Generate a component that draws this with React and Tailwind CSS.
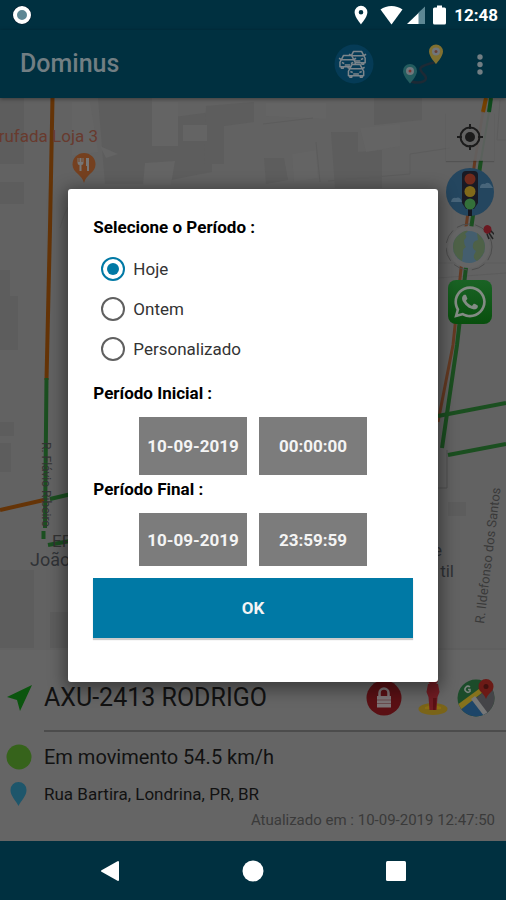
import React from "react";
import { useState } from "react";
import { FaWhatsapp } from "react-icons/fa";

const periods = ["Hoje", "Ontem", "Personalizado"];

const StatusBar = () => {
  return (
    <div className="h-[30px] bg-[#003040] flex items-center justify-between pl-3 pr-2 text-white">
      <svg viewBox="0 0 20 20" className="size-5">
        <circle cx="10" cy="10" r="9.5" fill="#001a2b" />
        <circle cx="10" cy="10" r="7" fill="#5d8794" stroke="#fff" strokeWidth="4" />
      </svg>
      <div className="flex items-center gap-1">
        <svg viewBox="0 0 14 20" className="w-[14px] h-5 mr-2">
          <path
            fillRule="evenodd"
            fill="#fff"
            d="M7 .8a6.4 6.4 0 0 0-6.4 6.5C.6 12 7 19.4 7 19.4s6.4-7.4 6.4-12.1A6.4 6.4 0 0 0 7 .8zm0 4.2a2.3 2.3 0 1 1 0 4.6a2.3 2.3 0 0 1 0-4.6z"
          />
        </svg>
        <svg viewBox="0 0 23 20" className="w-[23px] h-5">
          <path fill="#fff" d="M.5 4.5C6.5-.3 16.5-.3 22.5 4.5L11.5 19.5z" />
        </svg>
        <svg viewBox="0 0 18 20" className="w-[18px] h-5 mr-1">
          <path fill="#5d8794" d="M11 8L18 1.5V19h-7z" />
          <path fill="#fff" d="M0 19L11.5 8v11z" />
        </svg>
        <svg viewBox="0 0 13 20" className="w-[13px] h-5 mr-1">
          <path
            fill="#fff"
            d="M4 .5h5v2h2.5a1.5 1.5 0 0 1 1.500 1.500v14a1.500 1.500 0 0 1-1.500 1.500h-10A1.500 1.500 0 0 1 0 18V4a1.500 1.500 0 0 1 1.500-1.500H4z"
          />
        </svg>
        <span className="text-[17px] leading-6 font-bold">12:48</span>
      </div>
    </div>
  );
};

const Car = () => (
  <>
    <path d="M2.5 6L4.8 1.5h8.4L15.5 6" fill="#053b56" />
    <path d="M0 4.5l2.5 1.5h13L18 4.5" />
    <path d="M2.5 6L1 8.5v5h16v-5L15.5 6z" fill="#053b56" />
    <path d="M2.5 13.5V15h2v-1.5M13.5 13.5V15h2v-1.5M3 9l2.500 1M15 9l-2.500 1M6 11.500h6" />
  </>
);

const Header = () => {
  return (
    <header className="relative z-10 h-[68px] bg-[#003040] shadow-[0_1px_4px_rgba(0,0,0,0.4)] flex items-center gap-6 pl-5 pr-[14px]">
      <h1 className="flex-1 text-[25px] leading-8 font-medium text-[#727e83]">
        Dominus
      </h1>
      <button type="button" aria-label="Veículos" className="size-10">
        <svg viewBox="0 0 40 40" className="size-10">
          <circle cx="20" cy="20" r="19.500" fill="#053b56" />
          <g fill="none" stroke="#7c858b" strokeWidth="1.600" strokeLinejoin="round">
            <g transform="translate(15 6) scale(.95)">
              <Car />
            </g>
            <g transform="translate(5 10) scale(.95)">
              <Car />
            </g>
            <g transform="translate(13.500 19) scale(.95)">
              <Car />
            </g>
          </g>
        </svg>
      </button>
      <button type="button" aria-label="Rota" className="w-[46px] h-10">
        <svg viewBox="0 0 46 40" className="w-[46px] h-10">
          <path
            d="M13 37.500c10 3 19-1 13-7s-6-8 10-12"
            fill="none"
            stroke="#1d2a35"
            strokeWidth="2.500"
          />
          <path
            d="M38 .5a7 7 0 0 0-7 7C31 12.500 38 20 38 20s7-7.500 7-12.500a7 7 0 0 0-7-7z"
            fill="#807030"
          />
          <circle cx="38" cy="7.500" r="4" fill="#70757a" />
          <circle cx="38" cy="7.500" r="1.500" fill="#6a4136" />
          <path
            d="M12 20a7 7 0 0 0-7 7C5 32 12 39.500 12 39.500S19 32 19 27a7 7 0 0 0-7-7z"
            fill="#235c5f"
          />
          <circle cx="12" cy="27" r="4" fill="#70787d" />
          <circle cx="12" cy="27" r="1.500" fill="#7a3433" />
        </svg>
      </button>
      <button type="button" aria-label="Menu" className="w-6 h-10">
        <svg viewBox="0 0 24 40" className="w-6 h-10" fill="#727e83">
          <circle cx="12" cy="13" r="2.700" />
          <circle cx="12" cy="20.500" r="2.700" />
          <circle cx="12" cy="28" r="2.700" />
        </svg>
      </button>
    </header>
  );
};

const StreetMap = () => {
  return (
    <svg
      viewBox="0 0 506 552"
      preserveAspectRatio="xMidYMin slice"
      className="absolute inset-0 w-full h-full"
      fontFamily="Roboto, sans-serif"
    >
      <rect width="506" height="552" fill="#626262" />

      {/* Blocks */}
      <g fill="#5d5d5d">
        <path d="M0 0h24v66H0zM98 0h54v22l60-8v60l-62 12H105z" />
        <path d="M206 8l48-4v20l-30 4v38h-20zM331 34h27v20l24-2v38h-47zM264 60h20l4 22-22 4z" />
        <path d="M374 0h48v22l-48 5zM0 84h24v22H0zM0 172h10v26H0zM0 198h18v54H0z" />
        <path d="M0 324h14v14H0zM0 345h11v29H0zM0 472h34v78H0zM50 514h20v36H50zM448 404h18v14h-18z" />
      </g>
      <g fill="#646464">
        <path d="M72 4h18l8 50-26 4zM152 4h26v44h-26zM183 27h24v16h-24zM266 5h60v16l-60-3z" />
        <path d="M145 65l30-2-4 24h-28zM360 30l40-4v22l-34 6zM292 56l24-4 2 28-24 4zM100 48l18 8-12 4z" />
      </g>
      <g stroke="#5c5c5c" fill="none">
        <path d="M263 26l50-6M316 44l4 40M328 83l82-7v-20l40-6M438 165h68M438 180l68-5M60 130c4-14 8-24 16-28M438 551h68" />
        <path d="M500 2l-3 40h10" />
      </g>
      <path d="M447 352v38h-9" fill="none" stroke="#505050" />

      {/* Traffic */}
      <g fill="none" strokeWidth="4">
        <path d="M52.500 0L50 130L46.500 282" stroke="#653407" />
        <path d="M46.500 280L45 430M43.500 433v8" stroke="#1b4f20" />
        <path d="M0 412L44 402" stroke="#653407" />
        <path d="M50 401L80 394M48 447L70 443" stroke="#1b4f20" />
        <path d="M486 0l-3 14" stroke="#744000" />
        <path d="M483 14L475 62" stroke="#66544e" strokeWidth="2.500" />
        <path d="M475 62l-12 90-10 95-15 77" stroke="#653a22" strokeWidth="3" />
        <path d="M491 0l-2 14" stroke="#0e4a1c" />
        <path d="M489 14L481 62" stroke="#48604d" strokeWidth="2" />
        <path d="M481 62l-13 90-11 95-15 103" stroke="#1b4f20" />
        <path d="M438 318L506 305M448 357L506 346" stroke="#1b4f20" />
      </g>

      {/* Place names */}
      <text x="98" y="44" textAnchor="end" fontSize="17" fill="#683a2e">
        rufada Loja 3
      </text>
      <text transform="translate(42 344) rotate(90)" fontSize="12" fill="#333">
        R. Flávio Ribeiro
      </text>
      <text x="52" y="449" fontSize="17" fill="#333">
        EF
      </text>
      <text x="30" y="468" fontSize="18" fill="#303236">
        João
      </text>
      <text x="442" y="458" textAnchor="end" fontSize="17" fill="#303236">
        e
      </text>
      <text x="454" y="479" textAnchor="end" fontSize="17" fill="#303236">
        til
      </text>
      <text transform="translate(484 526) rotate(-83)" fontSize="13" fill="#3a3a3a">
        R. Ildefonso dos Santos
      </text>

      {/* Restaurant pin */}
      <path
        d="M84 55a11.500 11.500 0 0 0-11.500 11.500C72.500 75 82 76 84 85c2-9 11.500-10 11.500-18.500A11.500 11.500 0 0 0 84 55z"
        fill="#75401f"
      />
      <path
        d="M77.500 60v5q0 2 2 2v6h2v-6q2 0 2-2v-5h-1v4h-1v-4h-2v4h-1v-4zM86 60h3v13h-2v-5h-1z"
        fill="#777"
      />
    </svg>
  );
};

const MapButtons = () => {
  return (
    <div className="absolute right-3 top-[15px] flex flex-col gap-[7px]">
      <button
        type="button"
        aria-label="Minha localização"
        className="size-12 bg-[#636363]/70 shadow-[0_1px_1px_rgba(0,0,0,0.15)] grid place-items-center"
      >
        <svg viewBox="0 0 28 28" className="size-7" fill="none" stroke="#1b1b1b" strokeWidth="2">
          <circle cx="14" cy="14" r="9.500" />
          <circle cx="14" cy="14" r="5" fill="#1b1b1b" stroke="none" />
          <path d="M14 1v5M14 22v5M1 14h5M22 14h5" />
        </svg>
      </button>
      <button type="button" aria-label="Trânsito" className="size-12">
        <svg viewBox="0 0 48 48" className="size-12">
          <circle cx="24" cy="24" r="24" fill="#24465f" />
          <path d="M34 19q1-4 5-3 3-3 6 1l2 3H34zM5 34q1-5 5-4 4-2 6 4z" fill="#48657a" />
          <path d="M22 40h4v8h-4z" fill="#15161f" />
          <path d="M16 7a4 4 0 0 1 4-4h8a4 4 0 0 1 4 4v28l-4 6h-8l-4-6z" fill="#191a24" />
          <circle cx="24" cy="11" r="5.500" fill="#702a1c" />
          <circle cx="24" cy="23.500" r="5.500" fill="#80691a" />
          <circle cx="24" cy="36" r="5.500" fill="#34703a" />
        </svg>
      </button>
      <button type="button" aria-label="Satélite" className="size-12">
        <svg viewBox="0 0 48 48" className="size-12">
          <circle cx="23" cy="24" r="21" fill="#666" />
          <circle cx="23" cy="24" r="23" fill="none" stroke="#4c4c4c" strokeWidth="1" strokeDasharray="14 5" />
          <circle cx="23" cy="24" r="16" fill="#445e6e" />
          <path
            d="M14 11q5-4 8-3l-3 3q3 3-1 6 0 5 2 7-4 2-3 7l-1 7Q7 33 7 24q0-8 7-13zM31 10q8 6 8 14t-8 14q-4-2-3-6l2-4q-4-2-3-6 0-4 5-5z"
            fill="#4e6147"
          />
          <path d="M38 4q3-4 7 0l1 5-5 2q-5-2-3-7z" fill="#6b1820" />
          <path d="M41 11l2 5M45 8l4 4M43 10l4 6" stroke="#222" strokeWidth="1.500" />
        </svg>
      </button>
      <button type="button" aria-label="WhatsApp" className="size-12 grid place-items-center">
        <span className="size-11 rounded-lg bg-linear-to-b from-[#1a6325] to-[#084f0d] grid place-items-center">
          <FaWhatsapp className="size-9 text-[#838b84]" />
        </span>
      </button>
    </div>
  );
};

const VehiclePanel = () => {
  return (
    <section className="bg-[#656565] pt-6 pb-[7px] text-[#121212]">
      {/* Vehicle name */}
      <div className="h-12 flex items-center pr-[11px]">
        <svg viewBox="0 0 44 30" className="w-11 h-[30px]">
          <path d="M32 2L20 28l-3-11L7 14z" fill="#0b550e" />
        </svg>
        <h2 className="flex-1 text-[25px] leading-8">AXU-2413 RODRIGO</h2>
        <div className="flex gap-2">
          <button type="button" aria-label="Bloquear" className="size-[38px]">
            <svg viewBox="0 0 38 38" className="size-[38px]">
              <circle cx="19" cy="19" r="17.500" fill="#5a1014" />
              <path d="M14.500 18v-4a4.500 4.500 0 0 1 9 0v4" fill="none" stroke="#7d7476" strokeWidth="2.500" />
              <path d="M12 17h14v11.500H12z" fill="#7d7476" />
              <path d="M12 21h14M12 24.500h14" stroke="#6a4a4d" />
            </svg>
          </button>
          <button type="button" aria-label="Street View" className="size-[38px]">
            <svg viewBox="0 0 38 38" className="size-[38px]">
              <ellipse cx="22" cy="30" rx="14.500" ry="6" fill="#7a6418" />
              <path d="M14 28q8-4 16 0v2H14z" fill="#8a6c12" />
              <circle cx="22" cy="1" r="5" fill="#701b22" />
              <path d="M17 5h10l1.500 8-2 5-1 13h-7l-1-13-2-5z" fill="#701b22" />
              <path d="M22 19h3.500l-1 12H22z" fill="#5a1014" />
            </svg>
          </button>
          <button type="button" aria-label="Abrir no mapa" className="size-[38px]">
            <svg viewBox="0 0 38 38" className="size-[38px]">
              <clipPath id="mapsCircle">
                <circle cx="19" cy="19" r="18.500" />
              </clipPath>
              <g clipPath="url(#mapsCircle)">
                <path d="M0 0h38v38H0z" fill="#1c4c2a" />
                <path d="M0 31L18 15l16 23H6z" fill="#1d4568" />
                <path d="M19 19L38 4v34H30z" fill="#444448" />
                <path d="M0 26L26 7v6L2 32z" fill="#85721d" />
                <path d="M14 20l4-3 15 20h-6z" fill="#777" />
              </g>
              <path d="M13 8a3 3 0 1 0 0 4.500v-2h-2" fill="none" stroke="#7b837d" strokeWidth="1.500" />
              <path d="M29 0a7.500 7.500 0 0 0-7.500 7.500C21.500 13 27 14 29 20c2-6 7.500-7 7.500-12.500A7.500 7.500 0 0 0 29 0z" fill="#6b1a16" />
              <circle cx="29" cy="7.500" r="2.500" fill="#40100e" />
            </svg>
          </button>
        </div>
      </div>
      <hr className="mt-2 ml-11 border-t-2 border-[#4c4c4c]" />

      {/* Status */}
      <div className="h-[50px] flex items-center">
        <svg viewBox="0 0 44 26" className="w-11 h-[26px]">
          <circle cx="19" cy="13" r="12.500" fill="#36631b" />
        </svg>
        <p className="text-[20px] leading-6">Em movimento 54.5 km/h</p>
      </div>

      {/* Address */}
      <div className="h-6 flex items-center">
        <svg viewBox="0 0 44 24" className="w-11 h-6">
          <path
            d="M18.500 0a8 8 0 0 0-8 8c0 6 5 10 8 16 3-6 8-10 8-16a8 8 0 0 0-8-8z"
            fill="#1e566b"
          />
        </svg>
        <p className="text-[17px] leading-6">Rua Bartira, Londrina, PR, BR</p>
      </div>

      <p className="pr-[11px] text-right text-[15px] leading-7 text-[#3a3a3a]">
        Atualizado em : 10-09-2019 12:47:50
      </p>
    </section>
  );
};

const PeriodDialog = () => {
  const [period, setPeriod] = useState("Hoje");

  return (
    <div className="absolute inset-0 z-20 flex items-center justify-center">
      <form
        role="dialog"
        aria-label="Selecione o Período"
        onSubmit={(e) => {
          e.preventDefault();
        }}
        className="w-[73%] bg-white rounded-[3px] px-[25px] pt-6 pb-11 shadow-[0_4px_16px_4px_rgba(0,0,0,0.4)] text-black"
      >
        <fieldset>
          <legend className="text-[17px] leading-7 font-bold mb-2">
            Selecione o Período :
          </legend>
          {periods.map((item) => (
            <label
              key={item}
              className="h-10 pl-2 flex items-center gap-2 text-[17px] leading-6 text-[#333333]"
            >
              <input
                type="radio"
                name="period"
                value={item}
                checked={period === item}
                onChange={(e) => {
                  setPeriod(e.target.value);
                }}
                className="appearance-none size-6 rounded-full border-2 border-[#606060] grid place-content-center checked:border-[#0079a5] before:size-3 before:rounded-full checked:before:bg-[#0079a5]"
              />
              {item}
            </label>
          ))}
        </fieldset>

        {/* Start */}
        <h3 className="mt-2.5 text-[17px] leading-7 font-bold">
          Período Inicial :
        </h3>
        <div className="mt-2.5 flex justify-center gap-3 text-[17px] leading-6 font-bold text-[#f4f4f4]">
          <button type="button" className="w-[108px] h-[58px] bg-[#7c7c7c]">
            10-09-2019
          </button>
          <button type="button" className="w-[108px] h-[58px] bg-[#7c7c7c]">
            00:00:00
          </button>
        </div>

        {/* End */}
        <h3 className="text-[17px] leading-7 font-bold">Período Final :</h3>
        <div className="mt-2.5 flex justify-center gap-3 text-[17px] leading-6 font-bold text-[#f4f4f4]">
          <button type="button" className="w-[108px] h-[53px] bg-[#7c7c7c]">
            10-09-2019
          </button>
          <button type="button" className="w-[108px] h-[53px] bg-[#7c7c7c]">
            23:59:59
          </button>
        </div>

        <button
          type="submit"
          className="mt-3 w-full h-[60px] bg-[#0079a5] shadow-[0_2px_1px_rgba(0,0,0,0.2)] text-[17px] leading-6 font-bold text-[#f4f4f4]"
        >
          OK
        </button>
      </form>
    </div>
  );
};

const NavBar = () => {
  return (
    <nav className="h-[59px] bg-[#003040] px-[38px] grid grid-cols-3 place-items-center">
      <button type="button" aria-label="Voltar">
        <svg viewBox="0 0 22 22" className="size-[22px]">
          <path d="M3 11L19 2v18z" fill="#fff" stroke="#fff" strokeWidth="2" strokeLinejoin="round" />
        </svg>
      </button>
      <button type="button" aria-label="Início">
        <svg viewBox="0 0 22 22" className="size-[22px]">
          <circle cx="11" cy="11" r="10.500" fill="#fff" />
        </svg>
      </button>
      <button type="button" aria-label="Recentes">
        <svg viewBox="0 0 22 22" className="size-[22px]">
          <rect x="1" y="1" width="20" height="20" rx="1.500" fill="#fff" />
        </svg>
      </button>
    </nav>
  );
};

const App = () => {
  return (
    <div className="min-h-screen flex flex-col bg-[#003040] font-[Roboto,sans-serif]">
      <StatusBar />
      <main className="relative flex-1 flex flex-col">
        <Header />
        <div className="relative flex-1 min-h-[400px] overflow-hidden">
          <StreetMap />
          <MapButtons />
        </div>
        <VehiclePanel />
        <PeriodDialog />
      </main>
      <NavBar />
    </div>
  );
};

export default App;
